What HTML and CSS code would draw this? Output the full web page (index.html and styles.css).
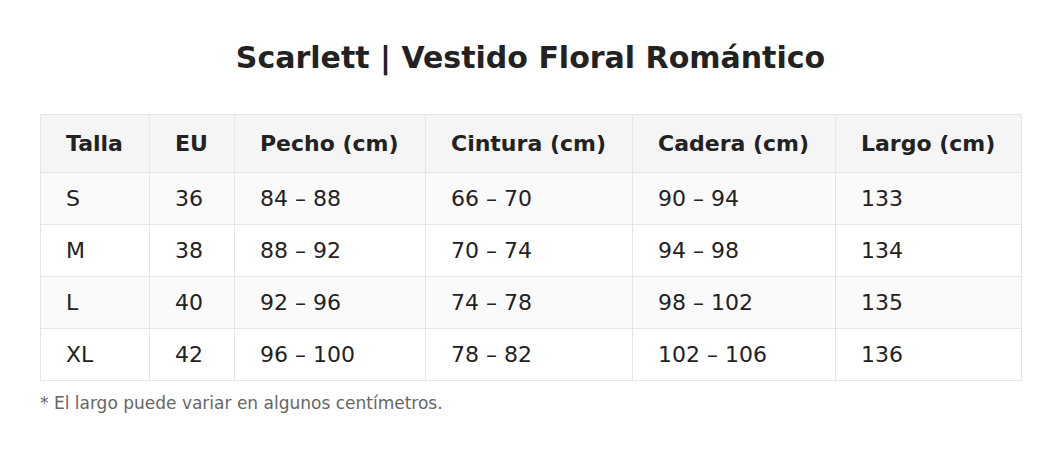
FILE: index.html
```html
<!DOCTYPE html>
<html lang="es">
<head>
<meta charset="utf-8">
<title>Scarlett | Vestido Floral Romántico</title>
<link rel="stylesheet" href="styles.css">
</head>
<body>
<main class="page">
  <h1 class="title">Scarlett | Vestido Floral Romántico</h1>
  <table class="sizes">
    <colgroup>
      <col class="c1"><col class="c2"><col class="c3"><col class="c4"><col class="c5"><col class="c6">
    </colgroup>
    <thead>
      <tr><th>Talla</th><th>EU</th><th>Pecho (cm)</th><th>Cintura (cm)</th><th>Cadera (cm)</th><th>Largo (cm)</th></tr>
    </thead>
    <tbody>
      <tr><td>S</td><td>36</td><td>84 – 88</td><td>66 – 70</td><td>90 – 94</td><td>133</td></tr>
      <tr><td>M</td><td>38</td><td>88 – 92</td><td>70 – 74</td><td>94 – 98</td><td>134</td></tr>
      <tr><td>L</td><td>40</td><td>92 – 96</td><td>74 – 78</td><td>98 – 102</td><td>135</td></tr>
      <tr><td>XL</td><td>42</td><td>96 – 100</td><td>78 – 82</td><td>102 – 106</td><td>136</td></tr>
    </tbody>
  </table>
  <p class="note">* El largo puede variar en algunos centímetros.</p>
</main>
</body>
</html>
```
FILE: styles.css
```css
html, body {
  margin: 0;
  padding: 0;
  background: #ffffff;
}
body {
  font-family: "DejaVu Sans", Verdana, sans-serif;
  color: #222222;
}
.page {
  padding: 40px 40px 0 40px;
}
.title {
  margin: 0 0 38px 0;
  text-align: center;
  font-size: 30px;
  font-weight: bold;
  line-height: 36px;
  color: #222222;
}
.sizes {
  width: 981px;
  border-collapse: collapse;
  table-layout: fixed;
  font-size: 22px;
}
.c1 { width: 109px; }
.c2 { width: 85px; }
.c3 { width: 191px; }
.c4 { width: 207px; }
.c5 { width: 203px; }
.c6 { width: 186px; }
.sizes th,
.sizes td {
  border: 1px solid #e6e6e6;
  text-align: left;
  padding: 0 0 0 25px;
  line-height: 24px;
}
.sizes th {
  height: 57px;
  font-weight: bold;
  background: #f5f5f5;
}
.sizes td {
  height: 51px;
}
.sizes tbody tr:nth-child(odd) td {
  background: #fafafa;
}
.sizes tbody tr:nth-child(even) td {
  background: #ffffff;
}
.note {
  margin: 11px 0 0 0;
  font-size: 17px;
  line-height: 22px;
  color: #666666;
}
```
